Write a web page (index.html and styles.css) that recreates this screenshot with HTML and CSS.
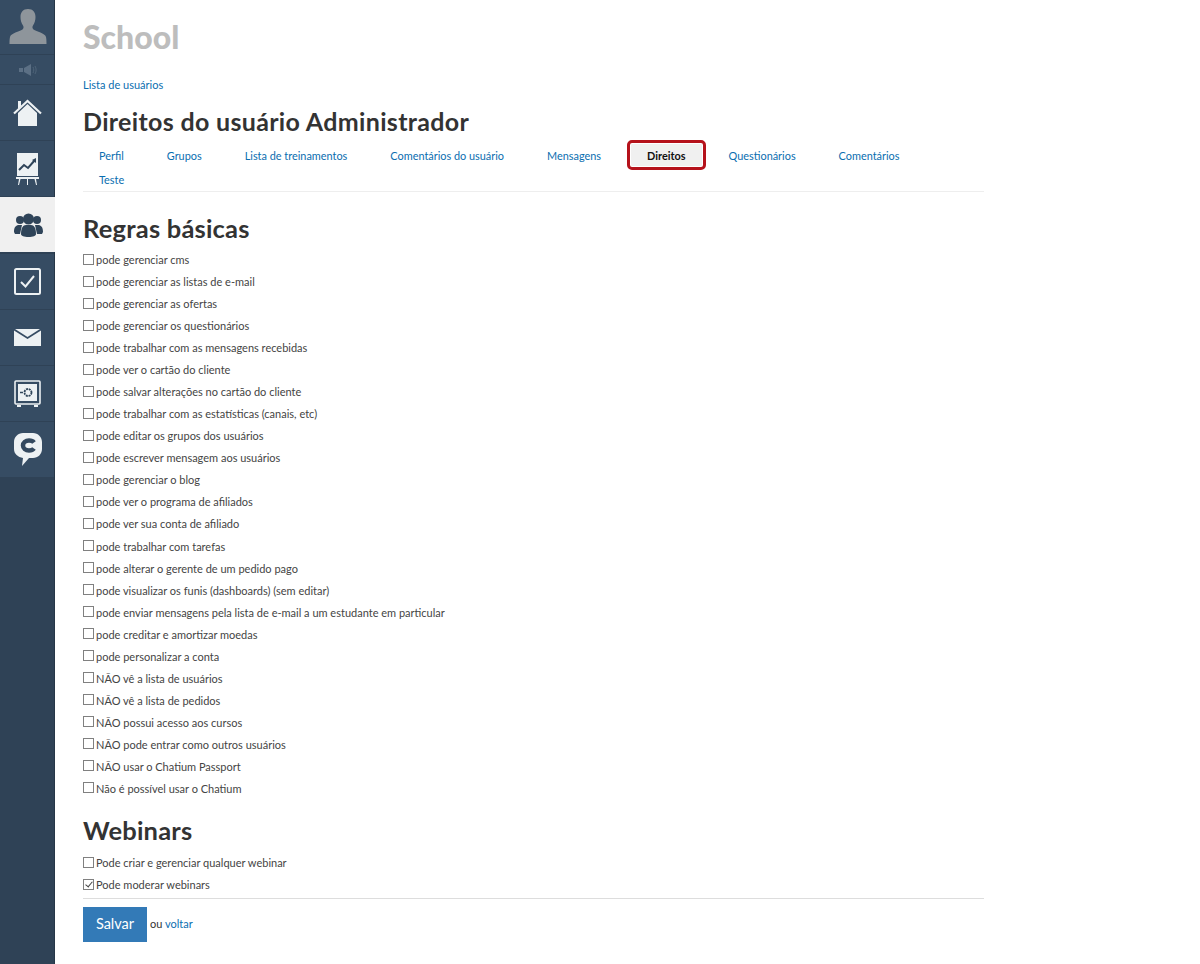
FILE: index.html
```html
<!DOCTYPE html>
<html lang="pt">
<head>
<meta charset="utf-8">
<title>Direitos do usuário</title>
<link rel="stylesheet" href="styles.css">
</head>
<body>
<nav class="sidebar">
  <a class="side-item side-avatar"><svg width="38" height="36" viewBox="0 0 38 36"><path fill="#8e959b" d="M19 0c-5 0-7.500 3.500-7.500 8 0 3 .8 6 2.500 8.500.8 1.200.8 3-.5 4-3 2-11.500 3.500-12.500 7.500-.5 2-.5 5-.5 7h37c0-2 0-5-.5-7-1-4-9.500-5.500-12.500-7.500-1.300-1-1.300-2.800-.5-4 1.700-2.500 2.500-5.500 2.500-8.500 0-4.500-2.500-8-7.500-8z"/></svg></a>
  <a class="side-item side-sound"><svg width="18" height="12" viewBox="0 0 18 12"><path fill="#5c7085" d="M0 4h4v4H0zM5 4l7-4v12L5 8z"/><path fill="none" stroke="#4f6479" d="M14 3c1 2 1 4 0 6M16 2c1.500 2.500 1.500 5.500 0 8"/></svg></a>
  <a class="side-item"><svg width="29" height="27" viewBox="0 0 29 27"><path fill="#edf1f3" d="M5 14 14.500 5 24 14v13H5z"/><path fill="none" stroke="#edf1f3" stroke-width="2.200" d="M1 14.500 14.500 2 28 14.500"/><path fill="#edf1f3" d="M5 2h3v5l-3 3z"/></svg></a>
  <a class="side-item"><svg width="23" height="32" viewBox="0 0 23 32"><path fill="#edf1f3" d="M1 0h21v23H1z"/><path fill="none" stroke="#2f4459" stroke-width="2" d="M3 17l5-5 4 3 7-8"/><path fill="#2f4459" d="M20 5v5l-4-3z"/><path fill="#edf1f3" d="M0 24h23v2H0zM3 26h1.500L3 32H2zM11 26h1v6h-1zM18.500 26H20l1 6h-1z"/></svg></a>
  <a class="side-item side-active"><svg width="29" height="24" viewBox="0 0 29 24"><g fill="#2f4459"><circle cx="6" cy="7" r="4"/><circle cx="23" cy="7" r="4"/><path d="M0 19c0-5 2-7 5-7h3l-2 9-5 0zM29 19c0-5-2-7-5-7h-3l2 9 5 0z"/><circle cx="14.500" cy="6" r="5.500"/><path d="M7 21c0-6 2-9 5-9h5c3 0 5 3 5 9 0 2-3 3-7.500 3S7 23 7 21z"/></g></svg></a>
  <a class="side-item side-sep"><svg width="27" height="27" viewBox="0 0 27 27"><rect x="1" y="1" width="25" height="25" rx="1.500" fill="none" stroke="#edf1f3" stroke-width="2"/><path fill="none" stroke="#edf1f3" stroke-width="2" d="M7 14l4.500 4.500L20 8"/></svg></a>
  <a class="side-item"><svg width="27" height="17" viewBox="0 0 27 17"><path fill="#edf1f3" d="M0 1.500V17h27V1.500L13.500 10z"/><path fill="#edf1f3" d="M1 0h25L13.500 8z"/></svg></a>
  <a class="side-item"><svg width="27" height="27" viewBox="0 0 27 27"><path fill="none" stroke="#edf1f3" stroke-width="1.600" d="M2 1h23a1 1 0 0 1 1 1v21a1 1 0 0 1-1 1H2a1 1 0 0 1-1-1V2a1 1 0 0 1 1-1z"/><rect x="4" y="4" width="19" height="17" fill="#edf1f3"/><circle cx="14" cy="12.500" r="3.500" fill="none" stroke="#2f4459" stroke-width="1.800" stroke-dasharray="2 .8"/><path stroke="#2f4459" stroke-width="1.500" d="M6 12.500h3"/><path fill="#edf1f3" d="M3 25h4v2H3zM20 25h4v2h-4z"/></svg></a>
  <a class="side-item side-last"><svg width="28" height="33" viewBox="0 0 28 33"><path fill="#edf1f3" d="M9 0h10c5 0 9 4 9 9v7c0 5-4 9-9 9h-4l-7 8 1-8c-5-1-9-4-9-9V9c0-5 4-9 9-9z"/><path fill="none" stroke="#34495f" stroke-width="4.500" d="M20 9.500c-1-1.300-3-2-5-2-3.500 0-6 2-6 5s2.500 5 6 5c2 0 4-.7 5-2"/></svg></a>
</nav>
<main class="content">
  <div class="school">School</div>
  <p class="crumb"><a href="#">Lista de usuários</a></p>
  <h1 class="title">Direitos do usuário Administrador</h1>
  <ul class="tabs">
    <li class="tab"><a href="#">Perfil</a></li>
    <li class="tab"><a href="#">Grupos</a></li>
    <li class="tab"><a href="#">Lista de treinamentos</a></li>
    <li class="tab"><a href="#">Comentários do usuário</a></li>
    <li class="tab"><a href="#">Mensagens</a></li>
    <li class="tab tab-active"><a href="#">Direitos</a></li>
    <li class="tab"><a href="#">Questionários</a></li>
    <li class="tab"><a href="#">Comentários</a></li>
    <li class="tab"><a href="#">Teste</a></li>
  </ul>
  <form>
    <h2 class="section">Regras básicas</h2>
    <label class="row"><input type="checkbox">pode gerenciar cms</label>
    <label class="row"><input type="checkbox">pode gerenciar as listas de e-mail</label>
    <label class="row"><input type="checkbox">pode gerenciar as ofertas</label>
    <label class="row"><input type="checkbox">pode gerenciar os questionários</label>
    <label class="row"><input type="checkbox">pode trabalhar com as mensagens recebidas</label>
    <label class="row"><input type="checkbox">pode ver o cartão do cliente</label>
    <label class="row"><input type="checkbox">pode salvar alterações no cartão do cliente</label>
    <label class="row"><input type="checkbox">pode trabalhar com as estatísticas (canais, etc)</label>
    <label class="row"><input type="checkbox">pode editar os grupos dos usuários</label>
    <label class="row"><input type="checkbox">pode escrever mensagem aos usuários</label>
    <label class="row"><input type="checkbox">pode gerenciar o blog</label>
    <label class="row"><input type="checkbox">pode ver o programa de afiliados</label>
    <label class="row"><input type="checkbox">pode ver sua conta de afiliado</label>
    <label class="row"><input type="checkbox">pode trabalhar com tarefas</label>
    <label class="row"><input type="checkbox">pode alterar o gerente de um pedido pago</label>
    <label class="row"><input type="checkbox">pode visualizar os funis (dashboards) (sem editar)</label>
    <label class="row"><input type="checkbox">pode enviar mensagens pela lista de e-mail a um estudante em particular</label>
    <label class="row"><input type="checkbox">pode creditar e amortizar moedas</label>
    <label class="row"><input type="checkbox">pode personalizar a conta</label>
    <label class="row"><input type="checkbox">NÃO vê a lista de usuários</label>
    <label class="row"><input type="checkbox">NÃO vê a lista de pedidos</label>
    <label class="row"><input type="checkbox">NÃO possui acesso aos cursos</label>
    <label class="row"><input type="checkbox">NÃO pode entrar como outros usuários</label>
    <label class="row"><input type="checkbox">NÃO usar o Chatium Passport</label>
    <label class="row"><input type="checkbox">Não é possível usar o Chatium</label>
    <h2 class="section section-web">Webinars</h2>
    <label class="row"><input type="checkbox">Pode criar e gerenciar qualquer webinar</label>
    <label class="row"><input type="checkbox" checked>Pode moderar webinars</label>
    <div class="actions">
      <button type="button" class="save">Salvar</button>
      <span class="or">ou <a href="#">voltar</a></span>
    </div>
  </form>
</main>
</body>
</html>
```
FILE: styles.css
```css
* { box-sizing: border-box; }
html, body { margin: 0; padding: 0; height: 964px; overflow: hidden; }
body {
  display: flex;
  background: #fff;
  font-family: "Lato", "Liberation Sans", sans-serif;
  color: #333;
  font-size: 11px;
}
a { color: #0a6eb0; text-decoration: none; }
.sidebar {
  width: 55px;
  flex: none;
  height: 964px;
  background: #2f4256;
  border-right: 1px solid #263647;
  display: flex;
  flex-direction: column;
}
.side-item {
  height: 56px;
  background: #364c63;
  border-bottom: 1px solid #2f4256;
  padding-left: 1px;
  display: flex;
  align-items: center;
  justify-content: center;
}
.side-avatar { height: 55px; }
.side-sound { height: 30px; }
.side-active { background: #f0f0f0; border-bottom: 0; height: 55px; margin-right: -1px; }
.side-sep { margin-top: 2px; }
.content { flex: 1; padding: 0 0 0 28px; }
.school {
  font-size: 32px;
  font-weight: 900;
  color: #bdbdbd;
  line-height: 36px;
  margin-top: 19px;
}
.crumb { margin: 21px 0 0; line-height: 18px; }
.title {
  font-size: 25px;
  font-weight: 700;
  letter-spacing: .33px;
  color: #333;
  margin: 12px 0 0;
  line-height: 30px;
}
.tabs {
  list-style: none;
  margin: 7px 0 0;
  padding: 0;
  width: 901px;
  display: flex;
  flex-wrap: wrap;
  border-bottom: 1px solid #eee;
}
.tab { height: 24px; line-height: 26px; padding: 0 16px; margin-right: 11px; font-size: 10.900px; }
.tab-active {
  background: #f0f0f0;
  border: 1px solid #fff;
  outline: 3px solid #b5121b;
  border-radius: 2px;
  font-weight: 700;
  margin: 0 10px 0 2px;
  padding: 0 16px;
  line-height: 24px;
}
.tab-active a { color: #111; }
.section {
  font-size: 25.500px;
  font-weight: 700;
  letter-spacing: .2px;
  margin: 21px 0 5.600px;
  line-height: 30px;
}
.section-web { margin: 15.400px 0 7px; }
.row {
  display: flex;
  align-items: center;
  height: 22.040px;
  color: #444;
}
.row input {
  appearance: none;
  width: 11px;
  height: 11px;
  margin: 0 2px 1px 0;
  border: 1px solid #808080;
  background: #fff;
  position: relative;
}
.row input:checked::after {
  content: "";
  position: absolute;
  left: 3px;
  top: 0;
  width: 3px;
  height: 6px;
  border: solid #444;
  border-width: 0 1px 1px 0;
  transform: rotate(40deg);
}
.actions {
  width: 901px;
  border-top: 1px solid #ddd;
  margin-top: 2px;
  padding-top: 8px;
  display: flex;
  align-items: center;
}
.save {
  width: 64px;
  height: 35px;
  padding: 0 0 2px;
  background: #337ab7;
  border: 0;
  color: #fff;
  font: 14.500px "Lato", sans-serif;
  margin-right: 3px;
}
.or { margin-bottom: 2px; }
```
